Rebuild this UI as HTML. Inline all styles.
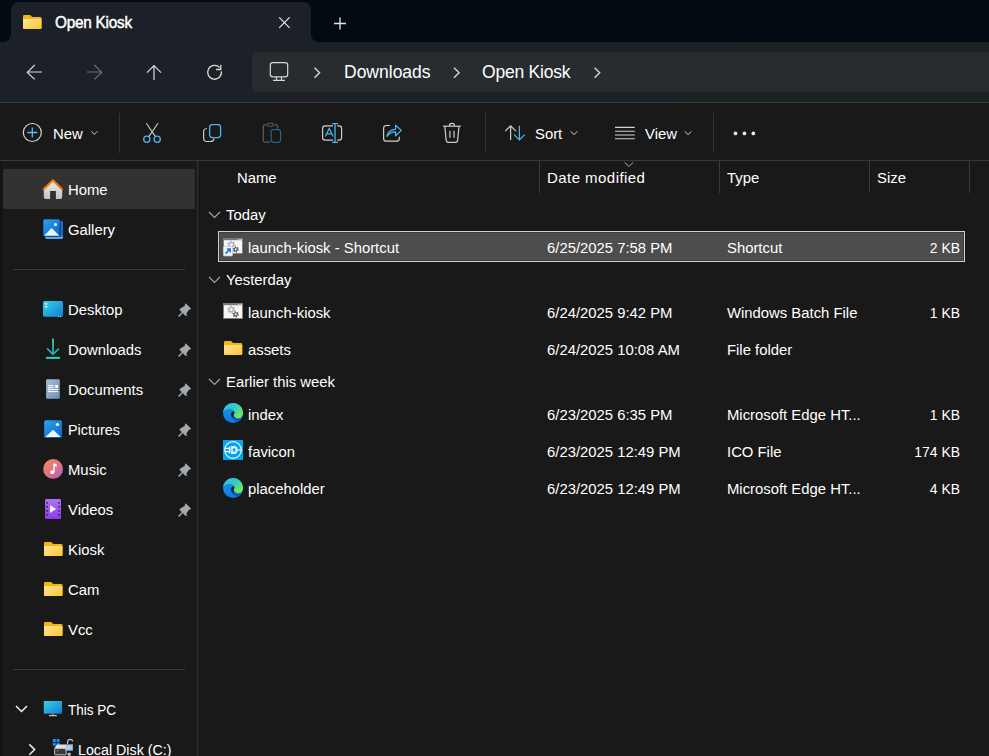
<!DOCTYPE html>
<html><head><meta charset="utf-8">
<style>
*{margin:0;padding:0;box-sizing:border-box}
html,body{width:989px;height:756px;overflow:hidden;background:#191919;font-family:"Liberation Sans",sans-serif;color:#fff}
.a{position:absolute}
.t{position:absolute;white-space:pre;font-size:15.5px;line-height:15px;color:#fff;margin-top:-2px;transform:scaleX(0.958);transform-origin:0 0}
.r{text-align:right;width:100px;transform-origin:100% 0;transform:scaleX(0.9)!important}
.t17{position:absolute;white-space:pre;font-size:17.5px;line-height:17px;color:#fff}
svg.ov{position:absolute;left:0;top:0;width:989px;height:756px;overflow:visible}
</style></head><body>
<!-- tab strip -->
<div class="a" style="left:0;top:0;width:989px;height:42px;background:#020a12"></div>
<div class="a" style="left:11px;top:2px;width:300px;height:40px;background:#1c2028;border-radius:8px 8px 0 0"></div>
<div class="a" style="left:3px;top:34px;width:8px;height:8px;background:#1c2028"></div>
<div class="a" style="left:3px;top:34px;width:8px;height:8px;background:#020a12;border-radius:0 0 8px 0"></div>
<div class="a" style="left:311px;top:34px;width:8px;height:8px;background:#1c2028"></div>
<div class="a" style="left:311px;top:34px;width:8px;height:8px;background:#020a12;border-radius:0 0 0 8px"></div>
<!-- nav row -->
<div class="a" style="left:0;top:42px;width:989px;height:60px;background:linear-gradient(90deg,#1c2028 0%,#1c2126 45%,#1c2123 100%)"></div>
<div class="a" style="left:252px;top:52px;width:750px;height:40px;background:#272c30;border-radius:5px"></div>
<div class="a" style="left:0;top:102px;width:989px;height:1px;background:#3a3a3a"></div>
<!-- command bar -->
<div class="a" style="left:0;top:103px;width:989px;height:57px;background:#191919"></div>
<div class="a" style="left:0;top:160px;width:989px;height:1px;background:#383838"></div>
<div class="a" style="left:119px;top:113px;width:1px;height:40px;background:#333"></div>
<div class="a" style="left:485px;top:113px;width:1px;height:40px;background:#333"></div>
<div class="a" style="left:713px;top:113px;width:1px;height:40px;background:#333"></div>
<!-- sidebar -->
<div class="a" style="left:0;top:161px;width:3px;height:595px;background:#141414"></div>
<div class="a" style="left:195px;top:161px;width:5px;height:595px;background:#151515"></div>
<div class="a" style="left:197px;top:161px;width:1px;height:595px;background:#2c2c2c"></div><div class="a" style="left:198px;top:161px;width:1px;height:595px;background:#222"></div><div class="a" style="left:196px;top:161px;width:1px;height:595px;background:#1d1d1d"></div>
<div class="a" style="left:3px;top:169px;width:192px;height:40px;background:#323232;border-radius:2px"></div>

<!-- tab title -->
<div class="t" style="left:55px;top:17px;font-size:16px;letter-spacing:-0.25px;-webkit-text-stroke:0.45px #fff">Open Kiosk</div>

<!-- breadcrumbs -->
<div class="t17" style="left:344px;top:64px">Downloads</div>
<div class="t17" style="left:482px;top:64px;letter-spacing:-0.22px">Open Kiosk</div>

<!-- command text -->
<div class="t" style="left:53px;top:128px">New</div>
<div class="t" style="left:535px;top:128px">Sort</div>
<div class="t" style="left:645px;top:128px">View</div>

<!-- header -->
<div class="t" style="left:237px;top:172px">Name</div>
<div class="t" style="left:547px;top:172px;transform:none;font-size:15px;letter-spacing:0.45px">Date modified</div>
<div class="t" style="left:727px;top:172px">Type</div>
<div class="t" style="left:877px;top:172px">Size</div>
<div class="a" style="left:539px;top:161px;width:1px;height:32px;background:#3a3a3a"></div>
<div class="a" style="left:719px;top:161px;width:1px;height:32px;background:#3a3a3a"></div>
<div class="a" style="left:869px;top:161px;width:1px;height:32px;background:#3a3a3a"></div>
<div class="a" style="left:969px;top:161px;width:1px;height:32px;background:#3a3a3a"></div>

<!-- selected row -->
<div class="a" style="left:218px;top:231px;width:747px;height:31px;background:#4d4d4d;border:1px solid #cfcfcf;box-shadow:inset 0 0 0 1px #3c3c3c"></div>

<!-- groups -->
<div class="t" style="left:226px;top:209px">Today</div>
<div class="t" style="left:226px;top:274px">Yesterday</div>
<div class="t" style="left:226px;top:376px">Earlier this week</div>

<!-- rows -->
<div class="t" style="left:248px;top:242px">launch-kiosk - Shortcut</div>
<div class="t" style="left:547px;top:242px">6/25/2025 7:58 PM</div>
<div class="t" style="left:727px;top:242px">Shortcut</div>
<div class="t r" style="left:860px;top:242px">2 KB</div>

<div class="t" style="left:248px;top:307px">launch-kiosk</div>
<div class="t" style="left:547px;top:307px">6/24/2025 9:42 PM</div>
<div class="t" style="left:727px;top:307px">Windows Batch File</div>
<div class="t r" style="left:860px;top:307px">1 KB</div>

<div class="t" style="left:248px;top:344px">assets</div>
<div class="t" style="left:547px;top:344px">6/24/2025 10:08 AM</div>
<div class="t" style="left:727px;top:344px">File folder</div>

<div class="t" style="left:248px;top:409px">index</div>
<div class="t" style="left:547px;top:409px">6/23/2025 6:35 PM</div>
<div class="t" style="left:727px;top:409px">Microsoft Edge HT...</div>
<div class="t r" style="left:860px;top:409px">1 KB</div>

<div class="t" style="left:248px;top:446px">favicon</div>
<div class="t" style="left:547px;top:446px">6/23/2025 12:49 PM</div>
<div class="t" style="left:727px;top:446px">ICO File</div>
<div class="t r" style="left:860px;top:446px">174 KB</div>

<div class="t" style="left:248px;top:483px">placeholder</div>
<div class="t" style="left:547px;top:483px">6/23/2025 12:49 PM</div>
<div class="t" style="left:727px;top:483px">Microsoft Edge HT...</div>
<div class="t r" style="left:860px;top:483px">4 KB</div>

<!-- sidebar text -->
<div class="t" style="left:68px;top:184px">Home</div>
<div class="t" style="left:68px;top:224px">Gallery</div>
<div class="a" style="left:13px;top:269px;width:172px;height:1px;background:#3a3a3a"></div>
<div class="t" style="left:68px;top:304px">Desktop</div>
<div class="t" style="left:68px;top:344px">Downloads</div>
<div class="t" style="left:68px;top:384px">Documents</div>
<div class="t" style="left:68px;top:424px;transform:scaleX(0.93)">Pictures</div>
<div class="t" style="left:68px;top:464px">Music</div>
<div class="t" style="left:68px;top:504px">Videos</div>
<div class="t" style="left:68px;top:544px">Kiosk</div>
<div class="t" style="left:68px;top:584px">Cam</div>
<div class="t" style="left:68px;top:624px">Vcc</div>
<div class="a" style="left:13px;top:669px;width:172px;height:1px;background:#3a3a3a"></div>
<div class="t" style="left:68px;top:704px;transform:scaleX(0.87)">This PC</div>
<div class="t" style="left:78px;top:744px;transform:scaleX(0.92)">Local Disk (C:)</div>

<svg class="ov" viewBox="0 0 989 756">
<defs>
 <linearGradient id="fold" x1="0" y1="0" x2="1" y2="1"><stop offset="0" stop-color="#ffe59a"/><stop offset="1" stop-color="#fbc531"/></linearGradient>
 <linearGradient id="roof" x1="0" y1="0" x2="1" y2="1" gradientUnits="objectBoundingBox"><stop offset="0" stop-color="#f6960a"/><stop offset="1" stop-color="#e65c00"/></linearGradient>
 <linearGradient id="home" x1="0" y1="0" x2="0" y2="1"><stop offset="0" stop-color="#ececec"/><stop offset="1" stop-color="#c4c4c4"/></linearGradient>
 <linearGradient id="blue" x1="0" y1="0" x2="1" y2="1"><stop offset="0" stop-color="#2aa6f2"/><stop offset="1" stop-color="#0b62c4"/></linearGradient>
 <linearGradient id="desk" x1="0" y1="0" x2="1" y2="1"><stop offset="0" stop-color="#34d2e6"/><stop offset="1" stop-color="#117ed6"/></linearGradient>
 <linearGradient id="dl" x1="0" y1="0" x2="0" y2="1"><stop offset="0" stop-color="#3fe0a0"/><stop offset="1" stop-color="#1bb0c4"/></linearGradient>
 <linearGradient id="doc" x1="0" y1="0" x2="1" y2="1"><stop offset="0" stop-color="#a9bdd2"/><stop offset="1" stop-color="#7090b6"/></linearGradient>
 <linearGradient id="mus" x1="0" y1="0" x2="1" y2="1"><stop offset="0" stop-color="#f58c4c"/><stop offset="0.6" stop-color="#d8708a"/><stop offset="1" stop-color="#a45ed0"/></linearGradient>
 <linearGradient id="vid" x1="0" y1="0" x2="0" y2="1"><stop offset="0" stop-color="#b070f4"/><stop offset="1" stop-color="#8a3ee6"/></linearGradient>
 <linearGradient id="edgeTop" x1="0" y1="0" x2="1" y2="0.7"><stop offset="0" stop-color="#2cb6f2"/><stop offset="0.55" stop-color="#36cbc6"/><stop offset="1" stop-color="#74ec4c"/></linearGradient>
 <linearGradient id="edgeBot" x1="0" y1="0" x2="0.3" y2="1"><stop offset="0" stop-color="#1c96ec"/><stop offset="1" stop-color="#0f7ae0"/></linearGradient>
 <g id="folder">
  <path d="M0 1.2Q0 0 1.2 0H7.2L9.2 2H17.3Q18.5 2 18.5 3.2V12.8Q18.5 14 17.3 14H1.2Q0 14 0 12.8Z" fill="#f2b70c"/>
  <path d="M0 4H18.5V12.8Q18.5 14 17.3 14H1.2Q0 14 0 12.8Z" fill="url(#fold)"/>
 </g>
 <g id="batch">
  <rect x="0.5" y="0.5" width="19" height="15" fill="#f6f6f6" stroke="#858079" stroke-width="1"/>
  <rect x="0" y="0" width="20" height="2.2" fill="#7d7872"/>
  <circle cx="15.5" cy="1.2" r="0.5" fill="#fff"/><circle cx="17" cy="1.2" r="0.5" fill="#fff"/><circle cx="18.5" cy="1.2" r="0.5" fill="#fff"/>
  <g transform="translate(8.3 6.6)"><circle r="3.3" fill="none" stroke="#a9b3bf" stroke-width="1.5" stroke-dasharray="1.5 1.96"/><circle r="2.2" fill="none" stroke="#a9b3bf" stroke-width="1.3"/></g>
  <g transform="translate(12.7 11.4)"><circle r="2.5" fill="none" stroke="#444950" stroke-width="1.2" stroke-dasharray="1.2 1.42"/><circle r="1.6" fill="none" stroke="#444950" stroke-width="1.1"/></g>
 </g>
 <g id="edge">
  <circle cx="10" cy="10" r="10" fill="url(#edgeBot)"/>
  <path d="M7.6 10.4C7.6 15 11 18.6 15.4 18.6C17.2 17.4 18.6 16 19.4 14.2C18.4 15 16.8 15.4 15 15.4C11.8 15.4 9.4 13.4 9.4 10.6Z" fill="#0b5cbc"/>
  <path d="M0.1 9.4C0.6 4.2 4.8 0.1 10 0.1C15.6 0.1 20 4.4 20 10C20 13.3 17.8 15.3 15 15.3C12.3 15.3 10.5 13.7 10.5 12.1C10.5 11.1 11.4 10.6 11.4 9.5C11.4 7.4 9 5.7 6.4 5.7C3.6 5.7 1 7.2 0.1 9.4Z" fill="url(#edgeTop)"/>
  <path d="M8.2 11.2C8.2 9.2 9.6 8 11.1 8.6C11.3 8.9 11.4 9.2 11.4 9.5C11.4 10.6 10.5 11.1 10.5 12.1C10.5 13.3 11.4 14.5 12.8 15.1C10.2 15.3 8.2 13.5 8.2 11.2Z" fill="#141a20"/>
 </g>
</defs>

<!-- tab icons -->
<use href="#folder" x="23" y="15"/>
<path d="M279.2 17.4L289.6 27.8M289.6 17.4L279.2 27.8" stroke="#e8e8e8" stroke-width="1.2"/>
<path d="M334 23.5H346M340 17.5V29.5" stroke="#e8e8e8" stroke-width="1.3"/>

<!-- nav icons -->
<path d="M27 72H42M34.7 65L27.3 72.4L34.7 79.4" stroke="#dadada" stroke-width="1.2" fill="none"/>
<path d="M87 72H102M94.3 65L101.7 72.4L94.3 79.4" stroke="#6e7072" stroke-width="1.2" fill="none"/>
<path d="M154 65.6V80M147 72.6L154 65.6L161 72.6" stroke="#dadada" stroke-width="1.2" fill="none"/>
<path d="M221.4 71.4A6.9 6.9 0 1 1 219.6 67.6" stroke="#dadada" stroke-width="1.3" fill="none"/>
<path d="M216.1 69.5H220.8V64.8" stroke="#dadada" stroke-width="1.3" fill="none"/>
<!-- monitor -->
<rect x="270.3" y="62.6" width="17.4" height="14.2" rx="2.6" stroke="#d6d6d6" stroke-width="1.2" fill="none"/>
<path d="M276.5 77V80.2M281.5 77V80.2M273 80.4H285" stroke="#d6d6d6" stroke-width="1.2" fill="none"/>
<path d="M314.5 67.8L319.6 72.8L314.5 77.8" stroke="#d6d6d6" stroke-width="1.4" fill="none"/>
<path d="M454 67.8L459.1 72.8L454 77.8" stroke="#d6d6d6" stroke-width="1.4" fill="none"/>
<path d="M594.6 67.8L599.7 72.8L594.6 77.8" stroke="#d6d6d6" stroke-width="1.4" fill="none"/>

<!-- command icons -->
<circle cx="32.3" cy="132.5" r="9" stroke="#d6d6d6" stroke-width="1.2" fill="none"/>
<path d="M32.3 127.5V137.5M27.3 132.5H37.3" stroke="#4cc2ff" stroke-width="1.3"/>
<path d="M91.3 131.4L94.3 134.4L97.3 131.4" stroke="#cfcfcf" stroke-width="1" fill="none"/>
<!-- scissors -->
<path d="M146.3 123.3L155.5 136.6M158 123.3L148.8 136.6" stroke="#cdcdcd" stroke-width="1.1"/>
<circle cx="146.8" cy="139.2" r="3.1" stroke="#4cb6ec" stroke-width="1.3" fill="none"/>
<circle cx="157.2" cy="139.2" r="3.1" stroke="#4cb6ec" stroke-width="1.3" fill="none"/>
<!-- copy -->
<path d="M206.8 128.5Q203.6 128.8 203.6 132V138.3Q203.6 141.5 206.8 141.5H210.6Q213.6 141.5 214 138.6" stroke="#cdcdcd" stroke-width="1.2" fill="none"/>
<rect x="209.6" y="124.6" width="11" height="13" rx="2.8" stroke="#4cb6ec" stroke-width="1.3" fill="none"/>
<!-- paste disabled -->
<path d="M266.5 124.8H265Q263.3 124.8 263.3 126.8V140.4Q263.3 142.2 265 142.2H270.3M274.5 124.8H276Q277.6 124.8 277.6 126.6V128.8" stroke="#5c5c5c" stroke-width="1.2" fill="none"/>
<rect x="267.4" y="123.3" width="6" height="3" rx="1.5" stroke="#5c5c5c" stroke-width="1.1" fill="none"/>
<rect x="271.2" y="129.6" width="9.4" height="12.7" rx="2.2" stroke="#2f5e7e" stroke-width="1.2" fill="none"/>
<!-- rename -->
<path d="M333 125.8H325.2Q322.6 125.8 322.6 128.4V137.6Q322.6 140.2 325.2 140.2H333M337.2 125.8H339Q341.6 125.8 341.6 128.4V137.6Q341.6 140.2 339 140.2H337.2" stroke="#cdcdcd" stroke-width="1.2" fill="none"/>
<path d="M335 123.5V142.5M332.2 123.6H338M332.2 142.4H338" stroke="#4cb6ec" stroke-width="1.3" fill="none"/>
<path d="M325.3 136.6L329.2 128.4L333 136.6M326.6 133.8H331.8" stroke="#4cb6ec" stroke-width="1.2" fill="none"/>
<!-- share -->
<path d="M390 125.5H386.4Q383.6 125.5 383.6 128.3V138.4Q383.6 141.2 386.4 141.2H396.5Q399.3 141.2 399.3 138.4V136.8" stroke="#cdcdcd" stroke-width="1.2" fill="none"/>
<path d="M386.8 136.4Q388.5 129.8 395.6 129.2V125.2L401.4 130.4L395.6 135.8V131.8Q390.6 131.6 386.8 136.4Z" stroke="#4cb6ec" stroke-width="1.2" fill="none" stroke-linejoin="round"/>
<!-- delete -->
<path d="M443 126.2H460.8" stroke="#cdcdcd" stroke-width="1.2"/>
<path d="M449.6 126V125Q449.6 123.4 451.8 123.4Q454.2 123.4 454.2 125V126" stroke="#cdcdcd" stroke-width="1.2" fill="none"/>
<path d="M444.8 126.4L446.2 140.4Q446.4 142.4 448.4 142.4H455.4Q457.4 142.4 457.6 140.4L459 126.4" stroke="#cdcdcd" stroke-width="1.2" fill="none"/>
<path d="M449.9 130.8V137.8M454 130.8V137.8" stroke="#cdcdcd" stroke-width="1.2"/>
<!-- sort -->
<path d="M510.6 125.8V140M505.2 131.2L510.6 125.8L516 131.2" stroke="#cdcdcd" stroke-width="1.2" fill="none"/>
<path d="M519.4 125.8V140M514 134.6L519.4 140L524.8 134.6" stroke="#4cb6ec" stroke-width="1.2" fill="none"/>
<path d="M570.6 131.4L574 134.6L577.4 131.4" stroke="#cfcfcf" stroke-width="1" fill="none"/>
<!-- view -->
<path d="M615 127.4H634.8M615 131.2H634.8M615 135H634.8M615 138.8H634.8" stroke="#d0d0d0" stroke-width="1.1"/>
<path d="M684.8 131.4L688.1 134.6L691.4 131.4" stroke="#cfcfcf" stroke-width="1" fill="none"/>
<!-- more -->
<circle cx="735.5" cy="133.4" r="1.85" fill="#ececec"/><circle cx="744.4" cy="133.4" r="1.85" fill="#ececec"/><circle cx="753.3" cy="133.4" r="1.85" fill="#ececec"/>

<!-- header sort chevron -->
<path d="M624.6 162.4L628.9 166.4L633.2 162.4" stroke="#a8a8a8" stroke-width="1" fill="none"/>
<!-- group chevrons -->
<path d="M209 212L214.5 217.5L220 212" stroke="#a8a8a8" stroke-width="1.1" fill="none"/>
<path d="M209 277L214.5 282.5L220 277" stroke="#a8a8a8" stroke-width="1.1" fill="none"/>
<path d="M209 379L214.5 384.5L220 379" stroke="#a8a8a8" stroke-width="1.1" fill="none"/>

<!-- list icons -->
<use href="#batch" x="223" y="238"/>
<g transform="translate(223 246)"><rect x="0.5" y="0.5" width="9" height="9.4" rx="1" fill="#f4f6f8" stroke="#c8ccd2" stroke-width="0.8"/><path d="M2.5 7.6L7 3.1M3.8 3H7.2V6.4" stroke="#1a78d8" stroke-width="1.5" fill="none"/></g>
<use href="#batch" x="223" y="303"/>
<use href="#folder" transform="translate(224 341) scale(0.985 1)"/>
<use href="#edge" x="223" y="403"/>
<g transform="translate(223 440)">
 <rect width="20" height="20" fill="#06a4ee"/>
 <circle cx="10" cy="10" r="8.3" stroke="#e8f6ff" stroke-width="1.2" fill="none"/>
 <path d="M1.8 8.4H6.4V11.6H1.8" stroke="#e8f6ff" stroke-width="1.1" fill="none"/>
 <path d="M6.8 6.6V13.4" stroke="#e8f6ff" stroke-width="1.3"/>
 <path d="M8.2 6H11Q14.6 6 14.6 10Q14.6 14 11 14H8.2Z" fill="#e8f6ff"/>
 <rect x="9.8" y="8.4" width="2.6" height="3.2" fill="#06a4ee"/>
 <path d="M14.6 10H18.3" stroke="#e8f6ff" stroke-width="1.3"/>
</g>
<use href="#edge" x="223" y="478"/>

<!-- sidebar icons -->
<!-- home -->
<path d="M43.8 189.2V197Q43.8 199 45.8 199H50.1V191.1H55.9V199H60.2Q62.2 199 62.2 197V189.2L53 180.8Z" fill="url(#home)"/>
<path d="M43.8 189L53 180.4L62.2 189" stroke="url(#roof)" stroke-width="2.1" fill="none" stroke-linecap="round"/>
<!-- gallery -->
<rect x="45.2" y="221" width="17.8" height="18" rx="1.6" fill="#5ea8ea"/>
<rect x="46" y="221" width="17" height="16" rx="1.4" fill="#1670d2"/>
<rect x="43" y="219" width="17.2" height="17.2" rx="1.6" fill="url(#blue)" stroke="#101010" stroke-width="0.6"/>
<path d="M44 235.8L51.7 227.9L59.4 235.8Z" fill="#e8f4ff"/>
<circle cx="55.5" cy="224.5" r="1.5" fill="#fff"/>
<!-- desktop -->
<rect x="43" y="301" width="20" height="15.8" rx="1.6" fill="url(#desk)"/>
<rect x="45.3" y="303.2" width="1.9" height="1.5" fill="#fff"/><rect x="45.3" y="306" width="1.9" height="1.5" fill="#fff"/>
<circle cx="58.5" cy="316.5" r="0.6" fill="#ddd"/><circle cx="60.6" cy="316.5" r="0.6" fill="#ddd"/>
<!-- downloads -->
<path d="M53 339V354M47.6 349L53 354.4L58.4 349" stroke="url(#dl)" stroke-width="1.7" fill="none" stroke-linecap="round"/>
<path d="M46 357.9H60" stroke="#33d2a8" stroke-width="2"/>
<!-- documents -->
<rect x="46.1" y="379.2" width="13.7" height="19.6" rx="1.4" fill="url(#doc)"/>
<path d="M48 385.6H53.8M48 387.6H53.8M48 389.6H58M48 391.6H58" stroke="#fff" stroke-width="1"/>
<rect x="55.2" y="385" width="2.8" height="2.9" fill="#fff"/>
<!-- pictures -->
<rect x="44.2" y="420.2" width="17.8" height="17.6" rx="1.6" fill="url(#blue)"/>
<path d="M45.4 437L53.1 429.8L60.8 437Z" fill="#e8f4ff"/>
<circle cx="57.4" cy="424.5" r="1.6" fill="#fff"/>
<!-- music -->
<circle cx="53.1" cy="468.9" r="9.9" fill="url(#mus)"/>
<path d="M54 463.5V472.2" stroke="#fff" stroke-width="1.4"/>
<path d="M54 463.2L56.8 464.6V466.8L54 465.6Z" fill="#fff"/>
<circle cx="52.2" cy="472.2" r="1.9" fill="#fff"/>
<!-- videos -->
<rect x="45.1" y="499" width="15.9" height="20" rx="1.4" fill="url(#vid)"/>
<g fill="#3a1e66"><rect x="46.3" y="502" width="1.6" height="1.6"/><rect x="46.3" y="506" width="1.6" height="1.6"/><rect x="46.3" y="510" width="1.6" height="1.6"/><rect x="46.3" y="514" width="1.6" height="1.6"/>
<rect x="58.2" y="502" width="1.6" height="1.6"/><rect x="58.2" y="506" width="1.6" height="1.6"/><rect x="58.2" y="510" width="1.6" height="1.6"/><rect x="58.2" y="514" width="1.6" height="1.6"/></g>
<path d="M50 505V513L56.2 509Z" fill="#f2ecfa"/>
<!-- folders -->
<use href="#folder" x="44" y="542"/>
<use href="#folder" x="44" y="582"/>
<use href="#folder" x="44" y="622"/>
<!-- this pc -->
<path d="M16 706L21.5 711.5L27 706" stroke="#f0f0f0" stroke-width="1.5" fill="none"/>
<rect x="43.8" y="701" width="18.2" height="12.7" fill="url(#desk)"/>
<path d="M52.9 713.7V715" stroke="#bbb" stroke-width="1"/>
<path d="M49 715.6H56.8" stroke="#c8c8c8" stroke-width="1.3"/>
<!-- local disk -->
<path d="M29.3 744.4L34.7 749.6L29.3 754.8" stroke="#e8e8e8" stroke-width="1.5" fill="none"/>
<g fill="#1a90f0"><rect x="52.8" y="739" width="3" height="3"/><rect x="56.6" y="739" width="3" height="3"/><rect x="52.8" y="742.8" width="3" height="3"/><rect x="56.6" y="742.8" width="3" height="3"/></g>
<path d="M54.2 748.6L56.8 744.6H66.4V748.6Z" fill="#e0e0e0"/>
<rect x="54.6" y="748.4" width="11.6" height="6.4" rx="0.8" fill="#3a3a3a" stroke="#cfcfcf" stroke-width="0.9"/>
<circle cx="57.6" cy="750.8" r="0.75" fill="#40d040"/>
<path d="M67.6 744.2V742Q67.6 739.4 70.2 739.4Q72.6 739.4 72.6 741.6" stroke="#b8bcc0" stroke-width="1.2" fill="none"/>
<rect x="65.2" y="744.2" width="7.6" height="6.6" fill="#c4c8cc"/>
<path d="M65.2 744.6H72.8M65.2 750.4H72.8" stroke="#1a90f0" stroke-width="0.9"/>
<circle cx="69.2" cy="754.2" r="1.8" fill="#aeb2b6"/>

<!-- pins -->
<g id="pin" fill="#a3abb2">
 <path d="M185.6 303.2L191.2 308.8L188.8 310L186.2 313.8L187.4 315L185.6 316L179.4 309.8L180.6 308.2L184.4 306.2Z"/>
 <path d="M182.4 312.6L178.6 316.4" stroke="#a3abb2" stroke-width="1.4"/>
</g>
<use href="#pin" y="40"/><use href="#pin" y="80"/><use href="#pin" y="120"/><use href="#pin" y="160"/><use href="#pin" y="200"/>
</svg>
</body></html>
